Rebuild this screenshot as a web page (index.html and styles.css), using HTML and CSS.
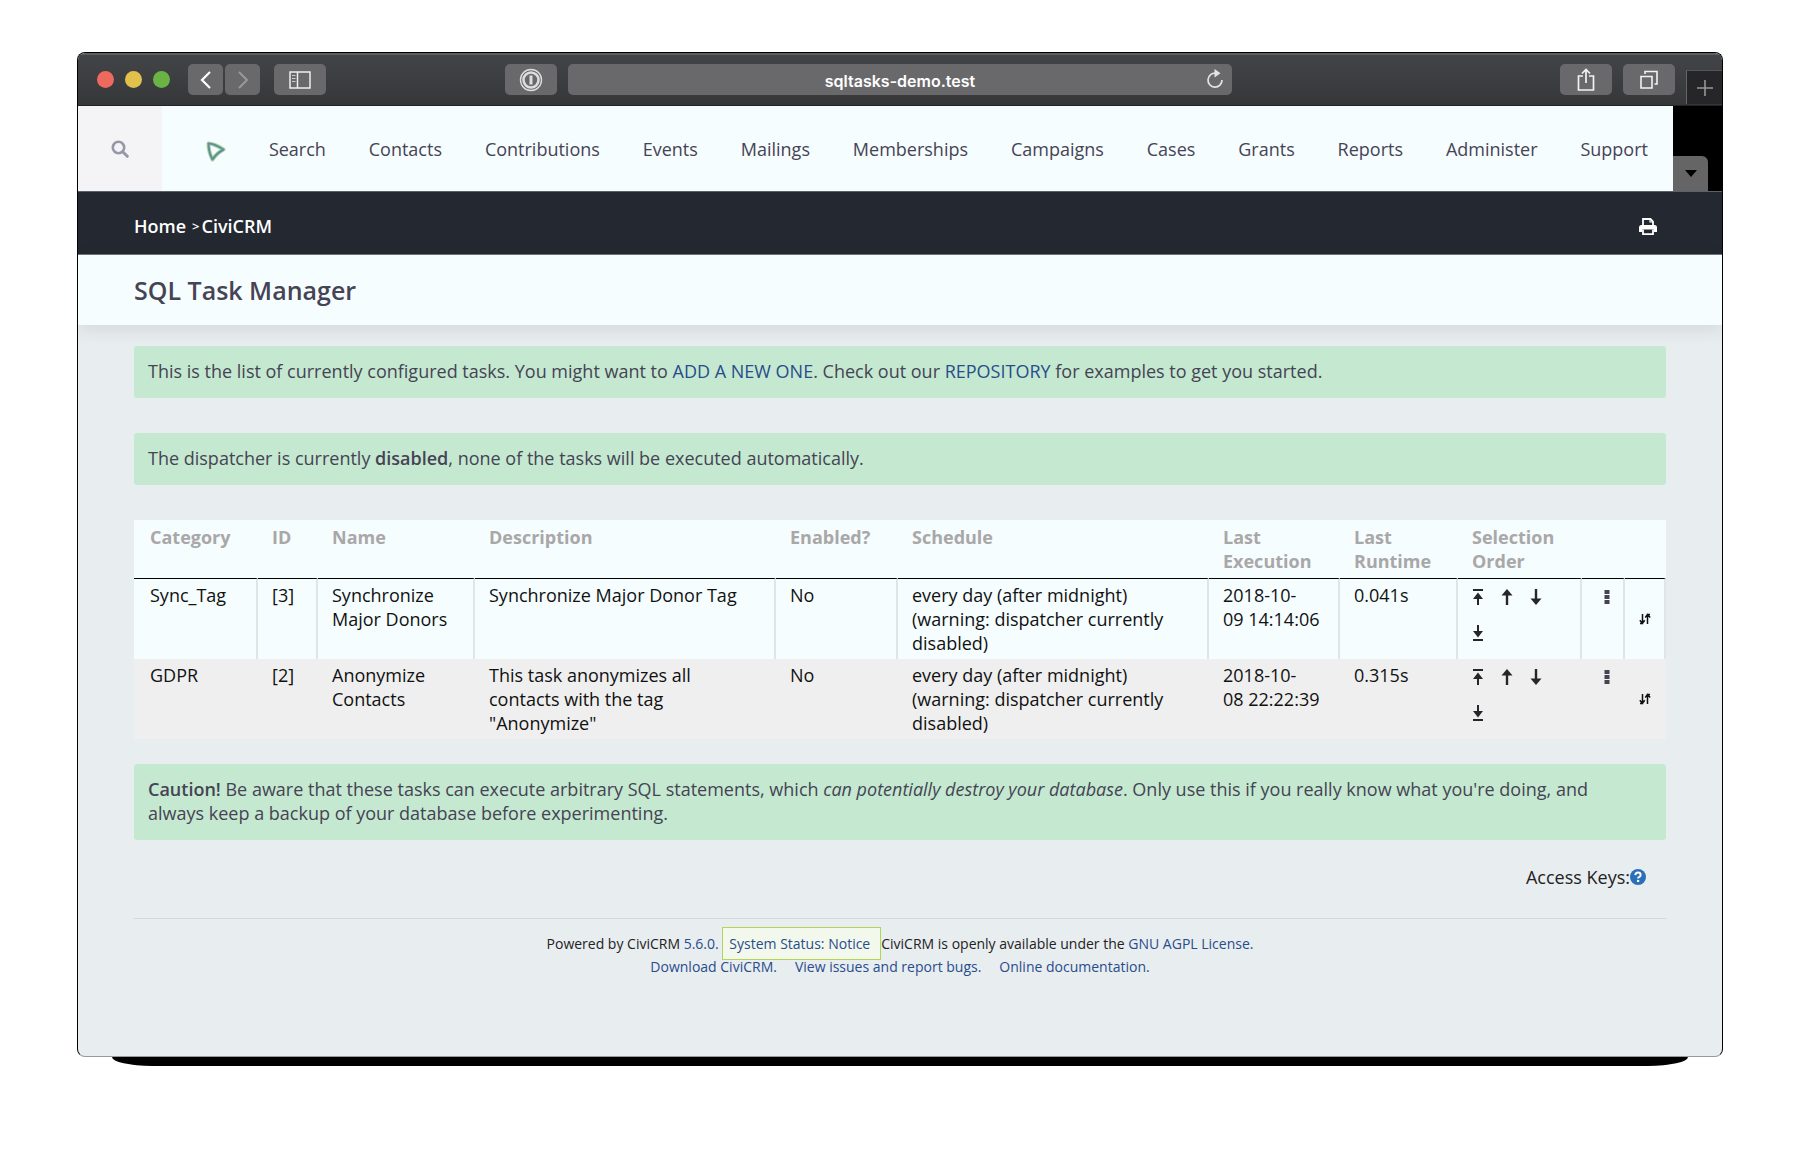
FILE: index.html
```html
<!DOCTYPE html>
<html lang="en">
<head>
<meta charset="utf-8">
<title>SQL Task Manager</title>
<link rel="stylesheet" href="styles.css">
</head>
<body>
<svg width="0" height="0" class="sprite" aria-hidden="true">
  <symbol id="to-top" viewBox="0 0 12 16"><path d="M1 1h10M6 16V7" stroke="currentColor" stroke-width="2" fill="none"/><path d="M6 3.5l5 6.5H1z" fill="currentColor"/></symbol>
  <symbol id="up" viewBox="0 0 12 16"><path d="M6 16V5" stroke="currentColor" stroke-width="2.4" fill="none"/><path d="M6 0l5.5 6.5H.5z" fill="currentColor"/></symbol>
  <symbol id="down" viewBox="0 0 12 16"><path d="M6 0v11" stroke="currentColor" stroke-width="2.4" fill="none"/><path d="M6 16l5.500-6.500H.5z" fill="currentColor"/></symbol>
  <symbol id="to-bottom" viewBox="0 0 12 16"><path d="M1 15h10M6 0v9" stroke="currentColor" stroke-width="2" fill="none"/><path d="M6 12.500l5-6.500H1z" fill="currentColor"/></symbol>
  <symbol id="dots" viewBox="0 0 6 16"><path d="M.5 1h5v4h-5zM.5 6h5v4h-5zM.5 11h5v4h-5z" fill="currentColor"/></symbol>
  <symbol id="sort" viewBox="0 0 12 12"><path d="M3.500 1v9.500H1M8.500 11V1.500H11M.8 7.300l2.700 3 2.200-3M6.300 4.500l2.200-3 2.700 3" stroke="currentColor" stroke-width="1.500" fill="none"/></symbol>
</svg>
<main class="window">
  <header class="toolbar">
    <div class="toolbar-left">
      <div class="lights"><span class="light red"></span><span class="light yellow"></span><span class="light green"></span></div>
      <div class="history">
        <button class="tool narrow" aria-label="Back"><svg width="12" height="18" viewBox="0 0 12 18"><path d="M10 1L2 9l8 8" fill="none" stroke="#fff" stroke-width="2.200"/></svg></button>
        <button class="tool narrow" aria-label="Forward"><svg width="12" height="18" viewBox="0 0 12 18"><path d="M2 1l8 8-8 8" fill="none" stroke="#99999b" stroke-width="2"/></svg></button>
      </div>
      <button class="tool" aria-label="Sidebar"><svg width="22" height="18" viewBox="0 0 22 18"><path d="M1 1h20v16H1zM8.500 1v16" fill="none" stroke="#eee" stroke-width="1.500"/><path d="M3 4.500h3.500M3 7.500h3.500M3 10.500h3.500" fill="none" stroke="#ccc" stroke-width="1.200"/></svg></button>
      <button class="tool password" aria-label="Passwords"><svg width="24" height="24" viewBox="0 0 24 24"><circle cx="12" cy="12" r="10.500" fill="none" stroke="#ddd" stroke-width="1.400"/><circle cx="12" cy="12" r="7.500" fill="none" stroke="#ddd" stroke-width="2.600"/><path d="M12 7.500v9" stroke="#ddd" stroke-width="3"/></svg></button>
    </div>
    <div class="address">
      <input class="address-input" type="text" aria-label="Address" value="sqltasks-demo.test">
      <button class="reload" aria-label="Reload"><svg width="18" height="20" viewBox="0 0 18 20"><path d="M10 4.200A7 7 0 1 0 16 11" fill="none" stroke="#e4e4e4" stroke-width="1.700"/><path d="M8.500 0l6 4.200-6 4.200z" fill="#e4e4e4"/></svg></button>
    </div>
    <div class="toolbar-right">
      <button class="tool" aria-label="Share"><svg width="18" height="24" viewBox="0 0 18 24"><path d="M6 8H1.500v14h15V8H12M9 15V2M5 5.500L9 1.500l4 4" fill="none" stroke="#f2f2f2" stroke-width="1.700"/></svg></button>
      <button class="tool" aria-label="Tabs"><svg width="18" height="20" viewBox="0 0 18 20"><path d="M1 6.500h11V18H1zM5 4V1.500h12V14h-2.500" fill="none" stroke="#f2f2f2" stroke-width="1.600"/></svg></button>
      <button class="new-tab" aria-label="New tab"><svg width="16" height="16" viewBox="0 0 16 16"><path d="M8 0v16M0 8h16" stroke="#98989a" stroke-width="1.600"/></svg></button>
    </div>
  </header>

  <div class="menubar">
    <button class="search" aria-label="Search"><svg width="18" height="18" viewBox="0 0 18 18"><circle cx="7.500" cy="7.500" r="5.700" fill="none" stroke="#9698a9" stroke-width="2.600"/><path d="M11.700 11.700l4.600 4.600" stroke="#9698a9" stroke-width="3" stroke-linecap="round"/></svg></button>
    <nav class="menu">
      <a class="logo" href="#" aria-label="CiviCRM"><svg width="20" height="22" viewBox="0 0 20 22"><path d="M2.500 3.500Q8 3.500 17.500 9.500 11 13 6.500 19.500 2.500 12 2.500 3.500z" fill="none" stroke="#b4d3a0" stroke-width="4" stroke-linejoin="round"/><path d="M2.500 3.500Q8 3.500 17.500 9.500 11 13 6.500 19.500 2.500 12 2.500 3.500z" fill="none" stroke="#5f9198" stroke-width="2" stroke-linejoin="round"/></svg></a>
      <a href="#">Search</a><a href="#">Contacts</a><a href="#">Contributions</a><a href="#">Events</a><a href="#">Mailings</a><a href="#">Memberships</a><a href="#">Campaigns</a><a href="#">Cases</a><a href="#">Grants</a><a href="#">Reports</a><a href="#">Administer</a><a href="#">Support</a>
    </nav>
    <div class="drawer"><button class="drawer-toggle" aria-label="Toggle drawer"><svg width="12" height="7" viewBox="0 0 12 7"><path d="M0 0h12L6 7z" fill="#000"/></svg></button></div>
  </div>

  <div class="breadcrumb">
    <div class="crumbs"><a href="#">Home</a><span class="sep">&gt;</span><a href="#">CiviCRM</a></div>
    <button class="print" aria-label="Print"><svg width="18" height="17" viewBox="0 0 18 17"><path d="M4 8V1h7.500L14 3.500V8" fill="none" stroke="#fff" stroke-width="1.800"/><path d="M11 1v3h3" fill="none" stroke="#fff" stroke-width="1.200"/><path d="M2.500 7h13Q18 7 18 9.500V14h-3v-2.500H3V14H0V9.500Q0 7 2.500 7z" fill="#fff"/><path d="M4 11.500v4.600h10v-4.600" fill="none" stroke="#fff" stroke-width="1.800"/></svg></button>
  </div>

  <div class="title"><h1>SQL Task Manager</h1></div>

  <div class="content">
    <p class="notice">This is the list of currently configured tasks. You might want to <a href="#">ADD A NEW ONE</a>. Check out our <a href="#">REPOSITORY</a> for examples to get you started.</p>
    <p class="notice">The dispatcher is currently <b>disabled</b>, none of the tasks will be executed automatically.</p>
    <table class="tasks">
      <colgroup><col class="c-category"><col class="c-id"><col class="c-name"><col class="c-description"><col class="c-enabled"><col class="c-schedule"><col class="c-execution"><col class="c-runtime"><col class="c-order"><col class="c-more"><col class="c-drag"></colgroup>
      <thead><tr><th>Category</th><th>ID</th><th>Name</th><th>Description</th><th>Enabled?</th><th>Schedule</th><th>Last Execution</th><th>Last Runtime</th><th>Selection Order</th><th></th><th></th></tr></thead>
      <tbody>
        <tr><td>Sync_Tag</td><td>[3]</td><td>Synchronize Major Donors</td><td>Synchronize Major Donor Tag</td><td>No</td><td>every day (after midnight) (warning: dispatcher currently disabled)</td><td>2018-10-09&nbsp;14:14:06</td><td>0.041s</td>
          <td class="order"><div class="moves"><a href="#" aria-label="Move to top"><svg><use href="#to-top"/></svg></a><a href="#" aria-label="Move up"><svg><use href="#up"/></svg></a><a href="#" aria-label="Move down"><svg><use href="#down"/></svg></a><a href="#" aria-label="Move to bottom"><svg><use href="#to-bottom"/></svg></a></div></td>
          <td class="more"><button aria-label="More actions"><svg><use href="#dots"/></svg></button></td><td class="drag"><svg><use href="#sort"/></svg></td></tr>
        <tr><td>GDPR</td><td>[2]</td><td>Anonymize Contacts</td><td>This task anonymizes all contacts with the tag "Anonymize"</td><td>No</td><td>every day (after midnight) (warning: dispatcher currently disabled)</td><td>2018-10-08&nbsp;22:22:39</td><td>0.315s</td>
          <td class="order"><div class="moves"><a href="#" aria-label="Move to top"><svg><use href="#to-top"/></svg></a><a href="#" aria-label="Move up"><svg><use href="#up"/></svg></a><a href="#" aria-label="Move down"><svg><use href="#down"/></svg></a><a href="#" aria-label="Move to bottom"><svg><use href="#to-bottom"/></svg></a></div></td>
          <td class="more"><button aria-label="More actions"><svg><use href="#dots"/></svg></button></td><td class="drag"><svg><use href="#sort"/></svg></td></tr>
      </tbody>
    </table>
    <p class="notice"><b>Caution!</b> Be aware that these tasks can execute arbitrary SQL statements, which <i>can potentially destroy your database</i>. Only use this if you really know what you're doing, and<br>always keep a backup of your database before experimenting.</p>
    <div class="access">Access Keys:<a href="#" aria-label="Help"><svg width="16" height="16" viewBox="0 0 16 16"><circle cx="8" cy="8" r="8" fill="#2a6fb8"/><path d="M5.300 6.200Q5.500 3.600 8 3.600t2.600 2.300Q10.600 7.200 9.300 7.900 8.100 8.500 8.100 9.600" fill="none" stroke="#fff" stroke-width="2"/><path d="M7 10.900h2.200V13H7z" fill="#fff"/></svg></a></div>
    <footer class="footer">
      <div>Powered by CiviCRM <a href="#">5.6.0.</a> <a class="status" href="#">System Status: Notice</a>CiviCRM is openly available under the <a href="#">GNU AGPL License.</a></div>
      <div class="footer-links"><a href="#">Download CiviCRM.</a><a href="#">View issues and report bugs.</a><a href="#">Online documentation.</a></div>
    </footer>
  </div>
</main>
<div class="window-shadow"></div>
</body>
</html>
```
FILE: styles.css
```css
* { box-sizing: border-box; }
body {
  margin: 0;
  padding: 52px 77px;
  background: #fff;
  color: #222;
  font: 18px/24px "Open Sans", "Noto Sans", sans-serif;
}
a { color: #294c8c; text-decoration: none; }
b { font-weight: 600; }
button { margin: 0; padding: 0; border: 0; background: none; font: inherit; }
svg { display: block; }
.sprite { position: absolute; }

.window {
  overflow: hidden;
  border: 1px solid #000;
  border-bottom-color: #999;
  border-radius: 8px;
  background: #e8edf0;
}
.window-shadow {
  height: 9px;
  margin: 0 35px;
  border-radius: 0 0 40px 40px / 0 0 9px 9px;
  background: #000;
}

/* Browser toolbar */
.toolbar {
  display: grid;
  grid-template-columns: 1fr minmax(0, 664px) 1fr;
  align-items: center;
  height: 53px;
  padding-bottom: 1px;
  border-top: 2px solid #5d5e60;
  border-bottom: 1px solid #222325;
  background: linear-gradient(#434447, #363739);
}
.toolbar-left { display: flex; align-items: center; padding: 0 11px 0 19px; }
.lights { display: flex; gap: 11px; }
.light { width: 17px; height: 17px; border-radius: 50%; }
.red { background: #ee695e; }
.yellow { background: #e1c04c; }
.green { background: #69b444; }
.history { display: flex; gap: 2px; margin: 0 14px 0 18px; }
.tool {
  display: flex;
  align-items: center;
  justify-content: center;
  width: 52px;
  height: 31px;
  border-radius: 5px;
  background: #69696b;
}
.narrow { width: 35px; }
.password { margin-left: auto; }
.address { position: relative; }
.address-input {
  display: block;
  width: 100%;
  height: 31px;
  padding: 2px 32px 0;
  border: 0;
  border-radius: 5px;
  background: #69696b;
  color: #fff;
  font: 600 16px/24px Inter, sans-serif;
  text-align: center;
}
.reload { position: absolute; top: 5px; right: 8px; }
.toolbar-right {
  display: flex;
  align-items: center;
  align-self: stretch;
  justify-content: flex-end;
  gap: 11px;
}
.new-tab {
  display: flex;
  align-items: center;
  justify-content: center;
  align-self: flex-end;
  width: 36px;
  height: 34px;
  border-top: 1px solid #555;
  border-left: 1px solid #666;
  background: #262628;
}

/* Site menu */
.menubar { display: flex; height: 85px; background: #f5fdff; }
.search {
  display: flex;
  align-items: center;
  justify-content: center;
  width: 84px;
  background: #f4f4f6;
}
.menu {
  display: flex;
  flex: 1;
  align-items: center;
  justify-content: space-between;
  padding: 0 25px 0 44px;
}
.menu a { color: #464354; }
.menu .logo { padding-top: 4px; }
.drawer { display: flex; align-items: flex-end; width: 49px; background: #000; }
.drawer-toggle {
  display: flex;
  align-items: center;
  justify-content: center;
  width: 35px;
  height: 35px;
  border-radius: 0 6px 0 0;
  background: #656565;
}

.breadcrumb {
  display: flex;
  align-items: center;
  justify-content: space-between;
  height: 64px;
  padding: 6px 65px 0 56px;
  border-top: 1px solid #59616a;
  border-bottom: 1px solid #6f777b;
  background: #232831;
  color: #fff;
}
.crumbs { display: flex; }
.breadcrumb a { color: #fff; font-weight: 600; }
.sep { margin: 0 2px 0 6px; font-size: 13px; font-weight: 600; }
.title {
  padding: 19px 56px;
  background: #f5fdff;
  box-shadow: 0 3px 18px rgba(48, 40, 40, .12);
}
h1 {
  margin: 0;
  color: #464354;
  font-size: 25px;
  font-weight: 600;
  line-height: 32px;
}

/* Page body */
.content { padding: 21px 56px 78px; }
.notice {
  margin: 0 0 35px;
  padding: 13px 14px 15px;
  border-radius: 3px;
  background: #c4e9d0;
  color: #464354;
}
.tasks {
  width: 100%;
  margin-bottom: 25px;
  border-spacing: 0;
  table-layout: fixed;
  background: #f5fdff;
}
.c-category { width: 124px; }
.c-id { width: 60px; }
.c-name { width: 157px; }
.c-description { width: 301px; }
.c-enabled { width: 122px; }
.c-schedule { width: 311px; }
.c-execution { width: 131px; }
.c-runtime { width: 118px; }
.c-order { width: 124px; }
.c-more { width: 43px; }
.c-drag { width: 41px; }
.tasks th {
  padding: 5px 12px 5px 14px;
  border-right: 2px solid #f5fdff;
  border-bottom: 1px solid #000;
  color: #a9a7a7;
  font-weight: 700;
  text-align: left;
  vertical-align: top;
}
.tasks td {
  padding: 4px 12px 4px 14px;
  border-right: 2px solid #dfe5e9;
  color: #111;
  vertical-align: top;
}
.tasks th:first-child, .tasks td:first-child { padding-left: 16px; }
.tasks tbody tr:nth-child(even) td { border-color: #efefef; background: #efefef; }
.tasks .order { padding-top: 0; padding-right: 0; }
.moves { display: flex; flex-wrap: wrap; }
.moves a { display: flex; align-items: center; width: 29px; height: 36px; color: #26262a; }
.moves svg { width: 12px; height: 16px; }
.tasks .more { padding: 10px 0 0 22px; }
.more button { display: block; color: #464354; }
.more svg { width: 6px; height: 16px; }
.tasks .drag { vertical-align: middle; }
.drag svg { width: 12px; height: 12px; }

.access {
  display: flex;
  align-items: center;
  justify-content: flex-end;
  margin-top: -10px;
  padding-right: 20px;
}
.footer {
  margin-top: 29px;
  padding-top: 13px;
  border-top: 1px solid #d3d8dc;
  font-size: 14px;
  line-height: 23px;
  text-align: center;
}
.status {
  padding: 6px 10px 6px 6px;
  border: 1px solid #b4d455;
  background: #f2f8ec;
}
.footer-links { display: flex; justify-content: center; gap: 18px; }
```
